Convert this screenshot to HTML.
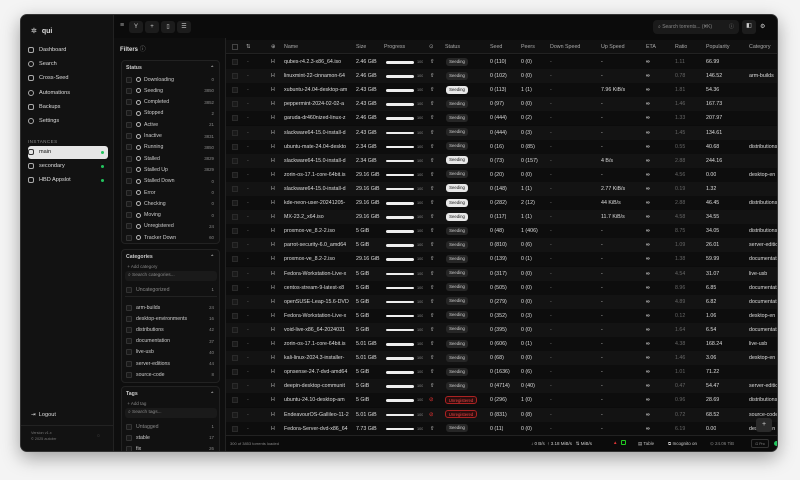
<!DOCTYPE html>
<html><head><meta charset="utf-8"><style>
*{box-sizing:border-box;margin:0;padding:0}
body{width:800px;height:480px;background:#f4f4f4;font-family:"Liberation Sans",sans-serif;overflow:hidden;position:relative;color:#ddd}
#win{position:absolute;left:20px;top:14px;width:758px;height:438px;background:#0b0b0b;border-radius:7px;overflow:hidden;box-shadow:0 6px 18px rgba(0,0,0,.35);border:1px solid #333}
.abs{position:absolute}
#side{left:0;top:0;width:93px;height:100%;background:#121212;border-right:1px solid #222}
.nav{position:absolute;left:7px;font-size:5.6px;color:#ddd;display:flex;align-items:center;gap:5px}
.nav i{display:inline-block;width:6px;height:6px;border:1px solid #aaa;border-radius:2px}
#filters{left:93px;top:23px;width:112px;height:415px;background:#0e0e0e;border-right:1px solid #222}
.card{position:absolute;left:7px;width:99px;border:1px solid #222;border-radius:4px;background:#111}
.it{position:absolute;left:4px;right:5px;height:9px;font-size:5.2px;color:#ccc;display:flex;align-items:center}
.it .cb{width:6px;height:6px;border:1px solid #333;border-radius:1px;margin-right:4px;background:#1a1a1a}
.it .ic{width:5px;height:5px;border:1px solid #bbb;border-radius:50%;margin-right:3px}
.it .n{position:absolute;right:0;color:#888;font-size:4.4px}
#top{left:93px;top:0;right:0;height:23px;background:#0b0b0b}
.tb{position:absolute;top:6px;width:14px;height:12px;background:#1c1c1c;border-radius:3px;color:#ccc;font-size:6px;text-align:center;line-height:12px}
#tbl{left:205px;top:24px;right:0;height:398px}
.row{position:absolute;left:0;right:0;height:14.1px;font-size:5.3px;color:#ddd;white-space:nowrap}
.row span{position:absolute;top:0;line-height:14.1px;overflow:hidden}
.bar{position:absolute;top:6px;height:2.5px;width:28px;background:#eee;border-radius:2px}
.bd{position:absolute;top:2.5px;height:8px;border-radius:3px;font-size:4.3px;line-height:7px;text-align:center;overflow:hidden}
#foot{left:205px;bottom:0;right:0;height:16px;border-top:1px solid #222;background:#0b0b0b;font-size:4.5px;color:#888}
</style></head><body>
<div id="win">
 <div id="side" class="abs">
  <div class="nav" style="top:12px;font-size:7px;font-weight:bold;left:10px"><span style="color:#aaa">✲</span> qui</div>
  <div class="nav" style="top:32px"><i></i>Dashboard</div>
  <div class="nav" style="top:46px"><i style="border-radius:50%"></i>Search</div>
  <div class="nav" style="top:60px"><i></i>Cross-Seed</div>
  <div class="nav" style="top:75px"><i style="border-radius:50%"></i>Automations</div>
  <div class="nav" style="top:89px"><i></i>Backups</div>
  <div class="nav" style="top:103px"><i style="border-radius:50%"></i>Settings</div>
  <div class="nav" style="top:124px;font-size:4.6px;color:#888;letter-spacing:.4px">INSTANCES</div>
  <div class="abs" style="left:7px;top:131px;width:80px;height:13px;background:#e6e6e6;border-radius:3px"></div>
  <div class="nav" style="top:134px;color:#111"><i style="border-color:#333"></i>main</div>
  <div class="abs" style="left:80px;top:136px;width:3px;height:3px;border-radius:50%;background:#22c55e"></div>
  <div class="nav" style="top:148px"><i></i>secondary</div>
  <div class="abs" style="left:80px;top:150px;width:3px;height:3px;border-radius:50%;background:#22c55e"></div>
  <div class="nav" style="top:162px"><i></i>HBD Appslot</div>
  <div class="abs" style="left:80px;top:164px;width:3px;height:3px;border-radius:50%;background:#22c55e"></div>
  <div class="nav" style="top:397px;left:10px">⇥ &nbsp;Logout</div>
  <div class="abs" style="left:0;top:410px;width:93px;border-top:1px solid #222"></div>
  <div class="abs" style="left:10px;top:415px;font-size:3.8px;color:#777;line-height:6px">Version v1.x<br>© 2025 autobrr</div>
  <div class="abs" style="left:76px;top:418px;font-size:5px;color:#888">◌</div>
 </div>
 <div id="top" class="abs">
  <div class="abs" style="left:6px;top:7px;font-size:7px;color:#aaa">≡</div>
  <div class="tb" style="left:15px">Y</div><div class="tb" style="left:31px">+</div><div class="tb" style="left:47px">▯</div><div class="tb" style="left:63px">☰</div>
  <div class="abs" style="left:539px;top:5px;width:86px;height:14px;background:#1a1a1a;border-radius:4px;font-size:5px;color:#888;line-height:14px;padding-left:5px">⌕ Search torrents... (⌘K) <span style="float:right;margin-right:5px">ⓘ</span></div>
  <div class="tb" style="left:628px;top:5px;height:14px">◧</div>
  <div class="abs" style="left:646px;top:8px;font-size:6px;color:#ccc">⚙</div>
 </div>
 <div id="filters" class="abs">
  <div class="abs" style="left:6px;top:6px;font-size:6px;font-weight:bold">Filters <span style="color:#888;font-weight:normal">ⓘ</span></div>
  <div class="card" style="top:22px;height:184px" id="st"></div>
  <div class="card" style="top:211px;height:134px" id="cat"></div>
  <div class="card" style="top:348px;height:80px" id="tag"></div>
 </div>
 <div id="tbl" class="abs"></div>
 <div id="foot" class="abs">
  <span class="abs" style="left:4px;top:5px;font-size:4px">300 of 3853 torrents loaded</span>
  <span class="abs" style="left:305px;top:5px;color:#ccc">↓ 0 B/s &nbsp;↑ 3.18 MiB/s &nbsp; ⇅ MiB/s</span>
  <span class="abs" style="left:387px;top:4px;color:#d33">▲</span>
  <span class="abs" style="left:395px;top:4px;width:5px;height:5px;border:1px solid #2c2;border-radius:1px"></span>
  <span class="abs" style="left:412px;top:5px;color:#bbb">▤ Table</span>
  <span class="abs" style="left:442px;top:5px;color:#ccc">⧉ Incognito on</span>
  <span class="abs" style="left:484px;top:5px">⊙ 24.06 TiB</span>
  <span class="abs" style="left:525px;top:3px;width:18px;height:9px;border:1px solid #333;border-radius:2px;font-size:3.5px;text-align:center;line-height:8px">⊡ Pro</span>
  <span class="abs" style="left:548px;top:5px;width:5px;height:5px;border-radius:50%;background:#22c55e"></span>
 </div>
 <div class="abs" style="left:735px;top:403px;width:16px;height:14px;background:#2a2a2a;border-radius:3px;text-align:center;color:#ccc;font-size:7px;line-height:13px">+</div>
</div>
<script>
function items(id,list,start,step){var c=document.getElementById(id),h='';list.forEach(function(x,i){var t=typeof x[2]=='number'?x[2]:start+i*step;h+='<div class="it" style="top:'+t+'px;'+(x[3]||'')+'">'+x[0]+'<span class="n">'+x[1]+'</span></div>';});c.innerHTML+=h;}
var st=document.getElementById('st');st.innerHTML='<div class="it" style="top:2px;font-weight:bold">Status<span class="n" style="color:#ccc">⌃</span></div>';
var S=[['Downloading',0],['Seeding',3850],['Completed',3852],['Stopped',2],['Active',21],['Inactive',3831],['Running',3850],['Stalled',3829],['Stalled Up',3829],['Stalled Down',0],['Error',0],['Checking',0],['Moving',0],['Unregistered',24],['Tracker Down',60]];
S=S.map(function(s){return ['<span class="cb"></span><span class="ic"></span>'+s[0],s[1]]});items('st',S,14,11.3);
var c=document.getElementById('cat');c.innerHTML='<div class="it" style="top:2px;font-weight:bold">Categories<span class="n" style="color:#ccc">⌃</span></div><div class="it" style="top:12px;color:#888;font-size:4.5px">&nbsp;+ Add category</div><div class="abs" style="left:3px;top:21px;width:92px;height:10px;background:#1a1a1a;border-radius:3px;font-size:4.8px;color:#888;line-height:10px;padding-left:3px">⌕ Search categories...</div><div class="abs" style="left:3px;top:46px;width:92px;border-top:1px solid #222"></div>';
items('cat',[['<span class="cb"></span>Uncategorized',1,35,'color:#888']],0,0);
items('cat',[['arm-builds',24],['desktop-environments',16],['distributions',42],['documentation',37],['live-usb',40],['server-editions',44],['source-code',8]].map(function(s){return ['<span class="cb"></span>'+s[0],s[1]]}),53,11.2);
var t=document.getElementById('tag');t.innerHTML='<div class="it" style="top:2px;font-weight:bold">Tags<span class="n" style="color:#ccc">⌃</span></div><div class="it" style="top:12px;color:#888;font-size:4.5px">&nbsp;+ Add tag</div><div class="abs" style="left:3px;top:21px;width:92px;height:10px;background:#1a1a1a;border-radius:3px;font-size:4.8px;color:#888;line-height:10px;padding-left:3px">⌕ Search tags...</div>';
items('tag',[['<span class="cb"></span>Untagged',1,35,'color:#888'],['<span class="cb"></span>stable',17,46],['<span class="cb"></span>fix',26,57]],0,0);
var R=[
['qubes-r4.2.3-x86_64.iso','2.46 GiB','0 (110)','0 (0)','-','1.11','66.99','',0],
['linuxmint-22-cinnamon-64','2.46 GiB','0 (102)','0 (0)','-','0.78','146.52','arm-builds',0],
['xubuntu-24.04-desktop-am','2.43 GiB','0 (113)','1 (1)','7.96 KiB/s','1.81','54.36','',1],
['peppermint-2024-02-02-a','2.43 GiB','0 (97)','0 (0)','-','1.46','167.73','',0],
['garuda-dr460nized-linux-z','2.46 GiB','0 (444)','0 (2)','-','1.33','207.97','',0],
['slackware64-15.0-install-d','2.43 GiB','0 (444)','0 (3)','-','1.45','134.61','',0],
['ubuntu-mate-24.04-deskto','2.34 GiB','0 (16)','0 (85)','-','0.55','40.68','distributions',0],
['slackware64-15.0-install-d','2.34 GiB','0 (73)','0 (157)','4 B/s','2.88','244.16','',1],
['zorin-os-17.1-core-64bit.is','29.16 GiB','0 (20)','0 (0)','-','4.56','0.00','desktop-en',0],
['slackware64-15.0-install-d','29.16 GiB','0 (148)','1 (1)','2.77 KiB/s','0.19','1.32','',1],
['kde-neon-user-20241205-','29.16 GiB','0 (282)','2 (12)','44 KiB/s','2.88','46.45','distributions',1],
['MX-23.2_x64.iso','29.16 GiB','0 (117)','1 (1)','11.7 KiB/s','4.58','34.55','',1],
['proxmox-ve_8.2-2.iso','5 GiB','0 (48)','1 (406)','-','8.75','34.05','distributions',0],
['parrot-security-6.0_amd64','5 GiB','0 (810)','0 (6)','-','1.09','26.01','server-editio',0],
['proxmox-ve_8.2-2.iso','29.16 GiB','0 (139)','0 (1)','-','1.38','59.99','documentat',0],
['Fedora-Workstation-Live-x','5 GiB','0 (317)','0 (0)','-','4.54','31.07','live-usb',0],
['centos-stream-9-latest-x8','5 GiB','0 (505)','0 (0)','-','8.96','6.85','documentat',0],
['openSUSE-Leap-15.6-DVD','5 GiB','0 (279)','0 (0)','-','4.89','6.82','documentat',0],
['Fedora-Workstation-Live-x','5 GiB','0 (352)','0 (3)','-','0.12','1.06','desktop-en',0],
['void-live-x86_64-2024031','5 GiB','0 (395)','0 (0)','-','1.64','6.54','documentat',0],
['zorin-os-17.1-core-64bit.is','5.01 GiB','0 (606)','0 (1)','-','4.38','168.24','live-usb',0],
['kali-linux-2024.3-installer-','5.01 GiB','0 (68)','0 (0)','-','1.46','3.06','desktop-en',0],
['opnsense-24.7-dvd-amd64','5 GiB','0 (1636)','0 (6)','-','1.01','71.22','',0],
['deepin-desktop-communit','5 GiB','0 (4714)','0 (40)','-','0.47','54.47','server-editio',0],
['ubuntu-24.10-desktop-am','5 GiB','0 (296)','1 (0)','-','0.96','28.69','distributions',2],
['EndeavourOS-Gallileo-11-2','5.01 GiB','0 (831)','0 (8)','-','0.72','68.52','source-code',2],
['Fedora-Server-dvd-x86_64','7.73 GiB','0 (11)','0 (0)','-','6.19','0.00','desktop-en',0]];
var h='<div class="row" style="top:1px;height:14px;background:#111;color:#aaa;border-bottom:1px solid #222"><span style="left:6px;top:4px;width:6px;height:6px;border:1px solid #444;line-height:6px"></span><span style="left:20px">⇅</span><span style="left:45px">⊕</span>';
[['Name',58],['Size',130],['Progress',158],['⊙',203],['Status',219],['Seed',264],['Peers',295],['Down Speed',324],['Up Speed',375],['ETA',420],['Ratio',449],['Popularity',480],['Category',523]].forEach(function(c){h+='<span style="left:'+c[1]+'px">'+c[0]+'</span>'});
h+='</div>';
R.forEach(function(r,i){var top=16+i*14.1,bg=i%2?'#131313':'#0d0d0d';
h+='<div class="row" style="top:'+top+'px;background:'+bg+'"><span style="left:6px;top:4px;width:6px;height:6px;border:1px solid #2a2a2a;background:#1a1a1a"></span><span style="left:21px;color:#777">-</span><span style="left:45px;color:#aaa">H</span>';
h+='<span style="left:58px;width:68px">'+r[0]+'</span><span style="left:130px">'+r[1]+'</span><div class="bar" style="left:160px"></div><span style="left:191px;color:#888;font-size:3.8px">100</span>';
if(r[8]==2){h+='<span style="left:203px;color:#e33">⊘</span><div class="bd" style="left:219px;width:32px;border:1px solid #a22;color:#e44;background:#2a0d0d">Unregistered</div>';}
else{h+='<span style="left:204px;color:#ccc">⇧</span><div class="bd" style="left:220px;width:22px;'+(r[8]?'background:#e8e8e8;color:#111':'background:#262626;color:#ccc')+'">Seeding</div>';}
h+='<span style="left:264px">'+r[2]+'</span><span style="left:295px">'+r[3]+'</span><span style="left:324px;color:#888">-</span><span style="left:375px">'+r[4]+'</span><span style="left:420px;font-weight:bold">∞</span><span style="left:449px;color:#666">'+r[5]+'</span><span style="left:480px">'+r[6]+'</span><span style="left:523px;width:30px">'+r[7]+'</span></div>';});
document.getElementById('tbl').innerHTML=h;
</script>
</body></html>
